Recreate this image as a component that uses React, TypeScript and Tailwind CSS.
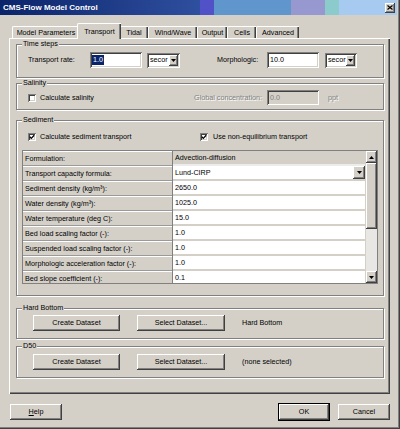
const raised =
  'shadow-[inset_-1px_-1px_0_#404040,inset_1px_1px_0_#ffffff,inset_-2px_-2px_0_#808080,inset_2px_2px_0_#d4d0c8]'
const sunken =
  'shadow-[inset_1px_1px_0_#808080,inset_-1px_-1px_0_#ffffff,inset_2px_2px_0_#404040,inset_-2px_-2px_0_#d4d0c8]'

function Arrow({ up = false }: { up?: boolean }) {
  return (
    <svg width="5" height="3" viewBox="0 0 5 3">
      <polygon points={up ? '0,3 5,3 2.5,0' : '0,0 5,0 2.5,3'} fill="#000" />
    </svg>
  )
}

function Checkbox({ checked }: { checked?: boolean }) {
  return (
    <div className={`w-[8px] h-[8px] bg-white flex items-center justify-center ${sunken}`}>
      {checked && (
        <svg width="6" height="6" viewBox="0 0 6 6">
          <path d="M0.8 2.8 L2.3 4.4 L5.2 1.2" stroke="#000" strokeWidth="1.3" fill="none" />
        </svg>
      )}
    </div>
  )
}

function Group({ label, className, children }: { label: string; className: string; children: React.ReactNode }) {
  return (
    <div className={`relative border border-[#808080] shadow-[inset_1px_1px_0_#ffffff,1px_1px_0_#ffffff] ${className}`}>
      <span className="absolute -top-[5px] left-[5px] px-[1px] bg-[#d4d0c8] leading-[8px]">{label}</span>
      {children}
    </div>
  )
}

function Button({ children, className = '' }: { children: React.ReactNode; className?: string }) {
  return (
    <div className={`h-[16px] bg-[#d4d0c8] flex items-center justify-center ${raised} ${className}`}>{children}</div>
  )
}

function Select({ w }: { w: string }) {
  return (
    <div className={`h-[15px] bg-white flex items-center pl-[3px] pr-[2px] ${sunken} ${w}`}>
      <span className="flex-1 overflow-hidden">secor</span>
      <div className={`w-[9px] h-[11px] bg-[#d4d0c8] flex items-center justify-center ${raised}`}>
        <Arrow />
      </div>
    </div>
  )
}

const rows: [string, string][] = [
  ['Formulation:', 'Advection-diffusion'],
  ['Transport capacity formula:', 'Lund-CIRP'],
  ['Sediment density (kg/m³):', '2650.0'],
  ['Water density (kg/m³):', '1025.0'],
  ['Water temperature (deg C):', '15.0'],
  ['Bed load scaling factor (-):', '1.0'],
  ['Suspended load scaling factor (-):', '1.0'],
  ['Morphologic acceleration factor (-):', '1.0'],
  ['Bed slope coefficient (-):', '0.1'],
]

const tabs = [
  { name: 'Model Parameters', w: 'w-[67px]' },
  { name: 'Transport', w: 'w-[44px]', active: true },
  { name: 'Tidal', w: 'w-[29px]' },
  { name: 'Wind/Wave', w: 'w-[49px]' },
  { name: 'Output', w: 'w-[30px]' },
  { name: 'Cells', w: 'w-[29px]' },
  { name: 'Advanced', w: 'w-[43px]' },
]

export default function App() {
  return (
    <div className="w-[400px] h-[429px] bg-[#d4d0c8] font-['Liberation_Sans',Arial,sans-serif] text-[7.2px] leading-none text-black shadow-[inset_-1px_-1px_0_#404040,inset_-2px_-2px_0_#808080] flex flex-col overflow-hidden">
      {/* title bar */}
      <div className="w-[397px] h-[15px] flex items-center justify-between pl-[3px] pr-[2px] bg-[linear-gradient(to_right,#0a246a_0%,#2f4f9f_50.4%,#5252c8_50.4%,#5252c8_53.9%,#5f96cc_53.9%,#5f96cc_73.3%,#9898d0_73.3%,#9898d0_81.9%,#8ccbcb_81.9%,#8ccbcb_85.4%,#a6caf0_85.4%)]">
        <span className="text-white font-bold text-[8px]">CMS-Flow Model Control</span>
        <div className={`w-[10px] h-[10px] bg-[#d4d0c8] flex items-center justify-center ${raised}`}>
          <svg width="6" height="5" viewBox="0 0 6 5">
            <path d="M0.5 0.5 L5.5 4.5 M5.5 0.5 L0.5 4.5" stroke="#000" strokeWidth="1.2" />
          </svg>
        </div>
      </div>

      {/* tabs */}
      <div className="mt-[8px] h-[15px] flex items-end pl-[12px]">
        {tabs.map((t) =>
          t.active ? (
            <div
              key={t.name}
              className={`relative z-10 -mx-[2px] -mb-[1px] h-[16px] ${t.w} bg-[#d4d0c8] border-t border-l border-white rounded-tl-[2px] shadow-[inset_-1px_0_0_#404040,inset_-2px_0_0_#808080] flex items-center justify-center`}
            >
              {t.name}
            </div>
          ) : (
            <div
              key={t.name}
              className={`h-[12px] ${t.w} border-t border-l border-white rounded-tl-[2px] shadow-[inset_-1px_0_0_#404040,inset_-2px_0_0_#808080] flex items-center justify-center`}
            >
              {t.name}
            </div>
          ),
        )}
      </div>

      {/* panel */}
      <div className="ml-[9px] w-[381px] h-[356px] border-t border-l border-white shadow-[inset_-1px_-1px_0_#404040,inset_-2px_-2px_0_#808080] pl-[6px] pt-[5px] flex flex-col">
        <Group label="Time steps" className="w-[368px] h-[34px] pt-[7px] pl-[11px]">
          <div className="flex items-center h-[16px]">
            <span className="w-[62px]">Transport rate:</span>
            <div className={`w-[52px] h-[16px] bg-white flex items-center pl-[2px] ${sunken}`}>
              <span className="bg-[#0a246a] text-white px-[1px] py-[1px]">1.0</span>
            </div>
            <div className="ml-[5px]">
              <Select w="w-[33px]" />
            </div>
            <span className="ml-[37px] w-[50px]">Morphologic:</span>
            <div className={`w-[52px] h-[16px] bg-white flex items-center pl-[3px] ${sunken}`}>10.0</div>
            <div className="ml-[6px]">
              <Select w="w-[32px]" />
            </div>
          </div>
        </Group>

        <Group label="Salinity" className="mt-[5px] w-[368px] h-[27px] pt-[6px] pl-[11px]">
          <div className="flex items-center h-[15px]">
            <div className="w-[162px] flex items-center gap-[4px]">
              <Checkbox />
              <span>Calculate salinity</span>
            </div>
            <span className="w-[72px] text-right text-[#808080] [text-shadow:1px_1px_0_#ffffff]">Global concentration:</span>
            <div className={`ml-[5px] w-[52px] h-[15px] bg-[#d4d0c8] flex items-center pl-[3px] text-[#808080] ${sunken}`}>0.0</div>
            <span className="ml-[9px] text-[#808080] [text-shadow:1px_1px_0_#ffffff]">ppt</span>
          </div>
        </Group>

        <Group label="Sediment" className="mt-[10px] w-[368px] h-[176px] pt-[11px] pl-[5px]">
          <div className="flex items-center h-[10px] pl-[6px]">
            <div className="w-[172px] flex items-center gap-[4px]">
              <Checkbox checked />
              <span>Calculate sediment transport</span>
            </div>
            <div className="flex items-center gap-[5px]">
              <Checkbox checked />
              <span>Use non-equilibrium transport</span>
            </div>
          </div>

          <div className="mt-[8px] w-[356px] h-[134px] border border-[#808080] flex overflow-hidden">
            <div className="w-[342px] flex flex-col">
              {rows.map(([k, v], i) => (
                <div key={k} className="flex h-[15px] shrink-0">
                  <div className="w-[150px] bg-[#d4d0c8] border-r border-[#808080] pl-[2px] flex items-center shadow-[inset_0_1px_0_#ffffff,inset_0_-1px_0_#9a9a9a]">
                    {k}
                  </div>
                  <div
                    className={`flex-1 flex items-center pl-[2px] border-b-2 border-[#d4d0c8] ${
                      i === 0 ? 'bg-[#d4d0c8] border-b-[#ececec]' : 'bg-white'
                    }`}
                  >
                    <span className="flex-1">{v}</span>
                    {i === 1 && (
                      <div className={`w-[12px] h-[13px] bg-[#d4d0c8] flex items-center justify-center ${raised}`}>
                        <Arrow />
                      </div>
                    )}
                  </div>
                </div>
              ))}
            </div>
            <div className="w-[12px] flex flex-col border-l border-[#d4d0c8]">
              <div className={`h-[12px] bg-[#d4d0c8] flex items-center justify-center ${raised}`}>
                <Arrow up />
              </div>
              <div className={`h-[66px] bg-[#d4d0c8] ${raised}`} />
              <div className="flex-1 bg-[#e9e7e3]" />
              <div className={`h-[12px] bg-[#d4d0c8] flex items-center justify-center ${raised}`}>
                <Arrow />
              </div>
            </div>
          </div>
        </Group>

        <Group label="Hard Bottom" className="mt-[12px] w-[368px] h-[31px] pt-[6px] pl-[16px]">
          <div className="flex items-center">
            <Button className="w-[87px]">Create Dataset</Button>
            <Button className="ml-[17px] w-[88px]">Select Dataset...</Button>
            <span className="ml-[17px]">Hard Bottom</span>
          </div>
        </Group>

        <Group label="D50" className="mt-[7px] w-[368px] h-[32px] pt-[7px] pl-[16px]">
          <div className="flex items-center">
            <Button className="w-[87px]">Create Dataset</Button>
            <Button className="ml-[17px] w-[88px]">Select Dataset...</Button>
            <span className="ml-[17px]">(none selected)</span>
          </div>
        </Group>
      </div>

      {/* footer buttons */}
      <div className="mt-[9px] flex items-center pl-[10px] pr-[10px]">
        <Button className="w-[52px]">
          <span>
            <span className="underline">H</span>elp
          </span>
        </Button>
        <div className="ml-auto border border-black">
          <Button className="w-[50px] h-[14px]">OK</Button>
        </div>
        <Button className="ml-[8px] w-[52px]">Cancel</Button>
      </div>
    </div>
  )
}
